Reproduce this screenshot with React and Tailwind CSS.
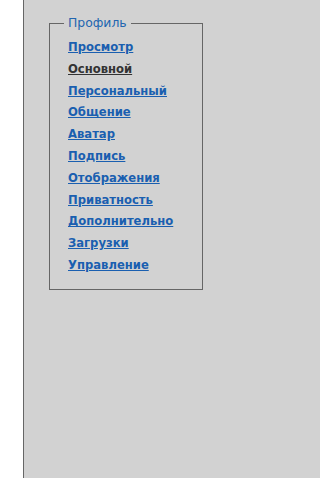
const links = [
  { label: 'Просмотр' },
  { label: 'Основной', active: true },
  { label: 'Персональный' },
  { label: 'Общение' },
  { label: 'Аватар' },
  { label: 'Подпись' },
  { label: 'Отображения' },
  { label: 'Приватность' },
  { label: 'Дополнительно' },
  { label: 'Загрузки' },
  { label: 'Управление' },
];

export default function App() {
  return (
    <div className="flex min-h-[478px] bg-white font-['DejaVu_Sans',Verdana,sans-serif]">
      <div className="w-[23px] shrink-0" />
      <div className="flex-1 border-l border-[#666] bg-[#d2d2d2] pt-[16px] pl-[25px]">
        <fieldset className="w-[154px] h-[274px] border border-[#666] pl-[18px] pr-2 pt-[8px] m-0 min-w-0">
          <legend className="px-[4px] -ml-[4px] text-[12.4px] text-[#2266b0] leading-[14px]">Профиль</legend>
          <ul className="flex flex-col">
            {links.map((l) => (
              <li key={l.label} className="h-[21.8px] leading-[16px]">
                <a
                  href="#"
                  className={`text-[11.6px] font-bold underline ${l.active ? 'text-[#333]' : 'text-[#1a5fb0]'}`}
                >
                  {l.label}
                </a>
              </li>
            ))}
          </ul>
        </fieldset>
      </div>
    </div>
  );
}
